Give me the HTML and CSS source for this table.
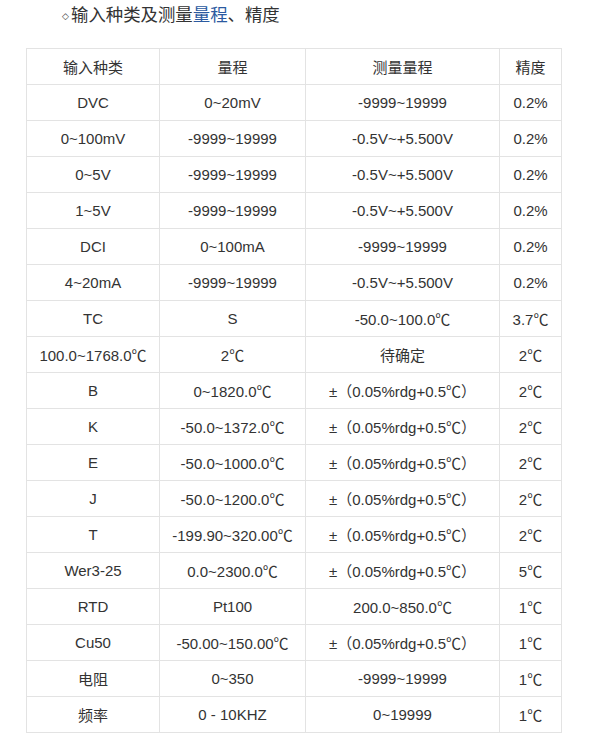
FILE: index.html
```html
<!DOCTYPE html>
<html lang="zh-CN">
<head>
<meta charset="utf-8">
<title>输入种类及测量量程、精度</title>
<link rel="stylesheet" href="styles.css">
</head>
<body>
<h3 class="title"><span class="diamond">◇</span>输入种类及测量<span class="link">量程</span>、精度</h3>
<table class="spec">
<colgroup><col class="c1"><col class="c2"><col class="c3"><col class="c4"></colgroup>
<tbody>
<tr><td>输入种类</td><td>量程</td><td>测量量程</td><td>精度</td></tr>
<tr><td>DVC</td><td>0~20mV</td><td>-9999~19999</td><td>0.2%</td></tr>
<tr><td>0~100mV</td><td>-9999~19999</td><td>-0.5V~+5.500V</td><td>0.2%</td></tr>
<tr><td>0~5V</td><td>-9999~19999</td><td>-0.5V~+5.500V</td><td>0.2%</td></tr>
<tr><td>1~5V</td><td>-9999~19999</td><td>-0.5V~+5.500V</td><td>0.2%</td></tr>
<tr><td>DCI</td><td>0~100mA</td><td>-9999~19999</td><td>0.2%</td></tr>
<tr><td>4~20mA</td><td>-9999~19999</td><td>-0.5V~+5.500V</td><td>0.2%</td></tr>
<tr><td>TC</td><td>S</td><td>-50.0~100.0℃</td><td>3.7℃</td></tr>
<tr><td>100.0~1768.0℃</td><td>2℃</td><td>待确定</td><td>2℃</td></tr>
<tr><td>B</td><td>0~1820.0℃</td><td>±（0.05%rdg+0.5℃）</td><td>2℃</td></tr>
<tr><td>K</td><td>-50.0~1372.0℃</td><td>±（0.05%rdg+0.5℃）</td><td>2℃</td></tr>
<tr><td>E</td><td>-50.0~1000.0℃</td><td>±（0.05%rdg+0.5℃）</td><td>2℃</td></tr>
<tr><td>J</td><td>-50.0~1200.0℃</td><td>±（0.05%rdg+0.5℃）</td><td>2℃</td></tr>
<tr><td>T</td><td>-199.90~320.00℃</td><td>±（0.05%rdg+0.5℃）</td><td>2℃</td></tr>
<tr><td>Wer3-25</td><td>0.0~2300.0℃</td><td>±（0.05%rdg+0.5℃）</td><td>5℃</td></tr>
<tr><td>RTD</td><td>Pt100</td><td>200.0~850.0℃</td><td>1℃</td></tr>
<tr><td>Cu50</td><td>-50.00~150.00℃</td><td>±（0.05%rdg+0.5℃）</td><td>1℃</td></tr>
<tr><td>电阻</td><td>0~350</td><td>-9999~19999</td><td>1℃</td></tr>
<tr><td>频率</td><td>0 - 10KHZ</td><td>0~19999</td><td>1℃</td></tr>
</tbody>
</table>
</body>
</html>
```
FILE: styles.css
```css
html, body {
  margin: 0;
  padding: 0;
  background: #ffffff;
}
body {
  color: #333333;
  font-family: "Liberation Sans", "Noto Sans CJK SC", sans-serif;
}
.title {
  margin: 0;
  padding-left: 62px;
  height: 30px;
  line-height: 30px;
  font-size: 17.4px;
  font-weight: normal;
  color: #333333;
}
.diamond {
  font-family: "DejaVu Sans", sans-serif;
  font-size: 9px;
  display: inline-block;
  width: 9px;
  vertical-align: 2px;
}
.link {
  color: #2b5aa0;
}
.spec {
  margin: 18px 0 0 26px;
  border-collapse: collapse;
  table-layout: fixed;
  width: 535px;
  font-size: 15px;
}
.c1 { width: 133px; }
.c2 { width: 146px; }
.c3 { width: 194px; }
.c4 { width: 62px; }
.spec td {
  border: 1px solid #e3e3e3;
  height: 35px;
  padding: 0;
  text-align: center;
  vertical-align: middle;
  white-space: nowrap;
}
```
